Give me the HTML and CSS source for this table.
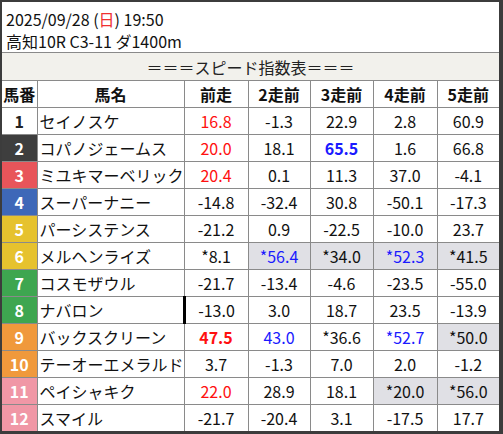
FILE: index.html
```html
<!DOCTYPE html>
<html lang="ja">
<head>
<meta charset="utf-8">
<link rel="stylesheet" href="styles.css">
</head>
<body>
<div class="frame">
  <div class="info">
    <div class="line">2025/09/28 (<span class="sun">日</span>) 19:50</div>
    <div class="line">高知10R C3-11 ダ1400m</div>
  </div>
  <table class="speed">
    <colgroup>
      <col class="c-no"><col class="c-name"><col class="c-v1"><col class="c-v2"><col class="c-v3"><col class="c-v4"><col class="c-v5">
    </colgroup>
    <thead>
      <tr class="title"><th colspan="7">＝＝＝スピード指数表＝＝＝</th></tr>
      <tr class="head"><th>馬番</th><th>馬名</th><th>前走</th><th>2走前</th><th>3走前</th><th>4走前</th><th>5走前</th></tr>
    </thead>
    <tbody>
      <tr><td class="no w1">1</td><td class="name">セイノスケ</td><td class="red">16.8</td><td>-1.3</td><td>22.9</td><td>2.8</td><td>60.9</td></tr>
      <tr><td class="no w2">2</td><td class="name">コパノジェームス</td><td class="red">20.0</td><td>18.1</td><td class="blue b">65.5</td><td>1.6</td><td>66.8</td></tr>
      <tr><td class="no w3">3</td><td class="name">ミユキマーベリック</td><td class="red">20.4</td><td>0.1</td><td>11.3</td><td>37.0</td><td>-4.1</td></tr>
      <tr><td class="no w4">4</td><td class="name">スーパーナニー</td><td>-14.8</td><td>-32.4</td><td>30.8</td><td>-50.1</td><td>-17.3</td></tr>
      <tr><td class="no w5">5</td><td class="name">パーシステンス</td><td>-21.2</td><td>0.9</td><td>-22.5</td><td>-10.0</td><td>23.7</td></tr>
      <tr><td class="no w5">6</td><td class="name">メルヘンライズ</td><td>*8.1</td><td class="gray blue">*56.4</td><td class="gray">*34.0</td><td class="gray blue">*52.3</td><td class="gray">*41.5</td></tr>
      <tr><td class="no w6">7</td><td class="name">コスモザウル</td><td>-21.7</td><td>-13.4</td><td>-4.6</td><td>-23.5</td><td>-55.0</td></tr>
      <tr><td class="no w6">8</td><td class="name">ナバロン</td><td class="mark">-13.0</td><td>3.0</td><td>18.7</td><td>23.5</td><td>-13.9</td></tr>
      <tr><td class="no w7">9</td><td class="name">バックスクリーン</td><td class="red b">47.5</td><td class="blue">43.0</td><td>*36.6</td><td class="blue">*52.7</td><td class="gray">*50.0</td></tr>
      <tr><td class="no w7">10</td><td class="name">テーオーエメラルド</td><td>3.7</td><td>-1.3</td><td>7.0</td><td>2.0</td><td>-1.2</td></tr>
      <tr><td class="no w8">11</td><td class="name">ペイシャキク</td><td class="red">22.0</td><td>28.9</td><td>18.1</td><td class="gray">*20.0</td><td class="gray">*56.0</td></tr>
      <tr><td class="no w8">12</td><td class="name">スマイル</td><td>-21.7</td><td>-20.4</td><td>3.1</td><td>-17.5</td><td>17.7</td></tr>
    </tbody>
  </table>
</div>
</body>
</html>
```
FILE: styles.css
```css
html, body {
  margin: 0;
  padding: 0;
  background: #fff;
}
body {
  font-family: "Noto Sans CJK JP", "Noto Sans", sans-serif;
  color: #111;
}
.frame {
  width: 497px;
  height: 429px;
  border-style: solid;
  border-color: #3c3c3c;
  border-width: 2px 4px 3px 2px;
  overflow: hidden;
  background: #fff;
}
.info {
  height: 50px;
  padding: 6px 0 0 4px;
  box-sizing: border-box;
  font-size: 16px;
  line-height: 22px;
}
.sun { color: #f03030; }
.speed {
  width: 497px;
  border-collapse: collapse;
  table-layout: fixed;
  font-size: 16px;
}
.c-no { width: 35px; }
.c-name { width: 147px; }
.c-v1 { width: 64px; }
.c-v2 { width: 62px; }
.c-v3 { width: 63px; }
.c-v4 { width: 64px; }
.c-v5 { width: 62px; }
.speed th, .speed td {
  border: 1px solid #8a8a8a;
  height: 26px;
  padding: 0;
  text-align: center;
  line-height: 26px;
  white-space: nowrap;
  overflow: hidden;
}
.speed tr > :first-child { border-left: none; }
.speed tr > :last-child { border-right: none; }
.title th {
  background: #f2f1ec;
  font-weight: normal;
  height: 27px;
  color: #222;
}
.head th {
  font-weight: bold;
  background: #fff;
}
.speed td.name {
  text-align: left;
  padding-left: 2px;
}
.no {
  font-weight: bold;
  color: #fff;
}
.w1 { background: #fff; color: #222; }
.w2 { background: #3e3e3e; }
.w3 { background: #e8555a; }
.w4 { background: #3e68b8; }
.w5 { background: #e6c22e; }
.w6 { background: #3ea650; }
.w7 { background: #f0993c; }
.w8 { background: #f097a6; }
.red { color: #ff1010; }
.blue { color: #1a1aff; }
.b { font-weight: bold; }
.gray { background: #e0e0e5; }
.speed td.mark { border-left: 3px solid #000; }
```
